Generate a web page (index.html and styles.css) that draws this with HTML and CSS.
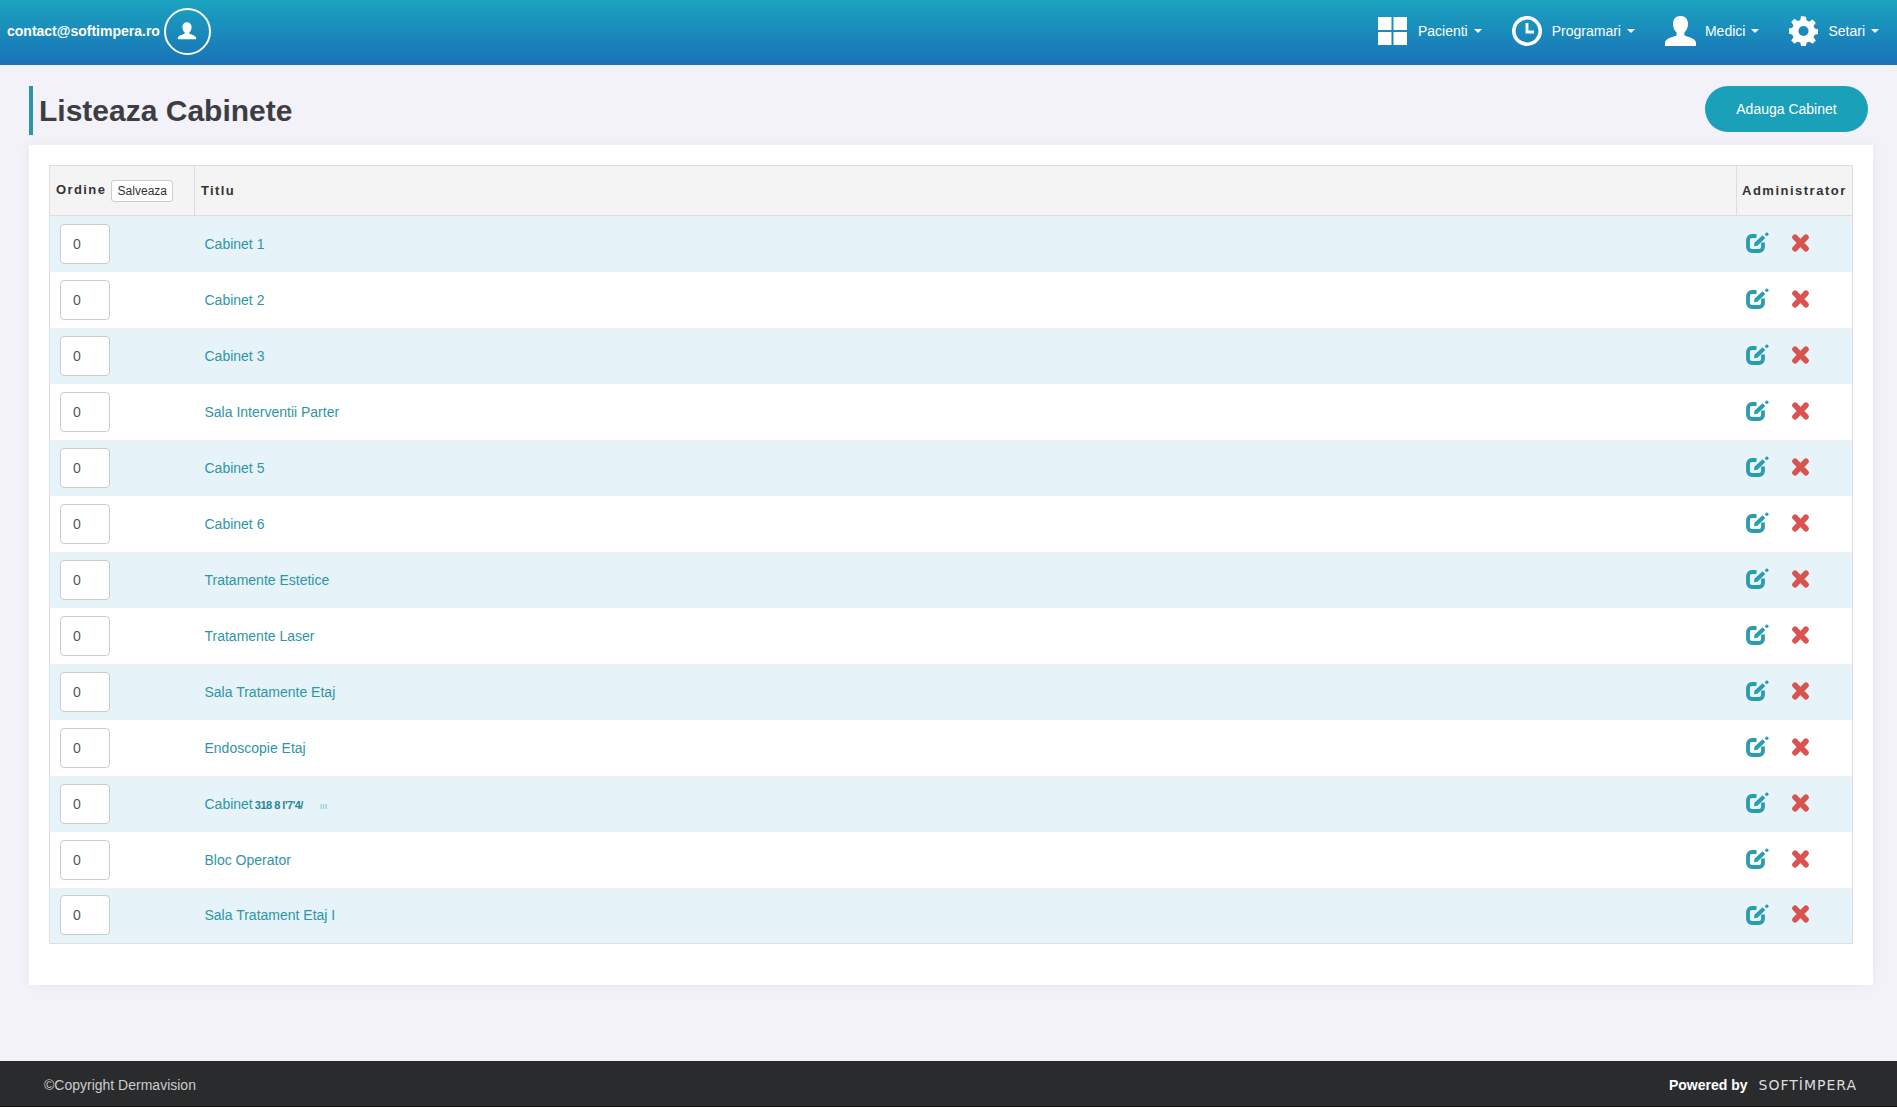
FILE: index.html
```html
<!DOCTYPE html>
<html lang="ro">
<head>
<meta charset="utf-8">
<title>Listeaza Cabinete</title>
<link rel="stylesheet" href="styles.css">
</head>
<body>
<header class="topbar">
  <div class="account">
    <span class="account-mail">contact@softimpera.ro</span>
    <span class="avatar">
      <svg width="22" height="22" viewBox="0 0 24 24"><path class="white" d="M12 2.500c3.200 0 5 2.300 5 5.300 0 2.400-1 4.400-2.400 5.500v1.700c2.500.9 7.400 2.200 7.400 4.800v1.200H2v-1.200c0-2.600 4.900-3.900 7.400-4.800v-1.700C8 12.200 7 10.200 7 7.800c0-3 1.800-5.300 5-5.300z"/></svg>
    </span>
  </div>
  <nav class="menu">
    <a class="menu-item item-grid">
      <svg width="29" height="28" viewBox="0 0 29 28"><path class="white" d="M0 0h13.500v13H0zM15.500 0H29v13H15.500zM0 15h13.500v13H0zM15.500 15H29v13H15.500z"/></svg>
      <span>Pacienti</span><i class="caret"></i>
    </a>
    <a class="menu-item item-clock">
      <svg width="30" height="30" viewBox="0 0 30 30"><circle cx="15" cy="15" r="13.200" fill="none" stroke="#fff" stroke-width="3.600"/><path d="M15 7v9h7" fill="none" stroke="#fff" stroke-width="2.800"/></svg>
      <span>Programari</span><i class="caret"></i>
    </a>
    <a class="menu-item item-user">
      <svg width="31" height="30" viewBox="0 0 31 30"><path class="white" d="M15.500 0c5 0 7.500 3.500 7.500 8 0 3.700-1.600 6.800-3.600 8.500v3c3.800 1.500 11.600 2.700 11.600 7.500v3H0v-3c0-4.800 7.800-6 11.600-7.500v-3C9.600 14.800 8 11.700 8 8c0-4.500 2.500-8 7.500-8z"/></svg>
      <span>Medici</span><i class="caret"></i>
    </a>
    <a class="menu-item item-gear">
      <svg width="29" height="30" viewBox="0 0 24 24"><path class="white" fill-rule="evenodd" d="M14 .200l.6 3.200c.8.200 1.500.5 2.100.9l2.800-1.900 2.700 2.700-1.900 2.800c.4.700.7 1.400.9 2.100l3.200.6v3.800l-3.200.6c-.2.800-.5 1.500-.9 2.100l1.900 2.800-2.700 2.700-2.800-1.900c-.7.400-1.400.7-2.100.9l-.6 3.200h-4l-.6-3.200c-.8-.2-1.500-.5-2.100-.9l-2.800 1.900-2.700-2.700 1.900-2.800c-.4-.7-.7-1.400-.9-2.100L-.4 13.900V10l3.200-.6c.2-.8.500-1.500.9-2.100L1.800 4.500l2.700-2.700 2.800 1.900c.7-.4 1.400-.7 2.100-.9l.6-3.200zM12 7.800a4.200 4.200 0 1 0 0 8.400 4.200 4.200 0 0 0 0-8.400z"/></svg>
      <span>Setari</span><i class="caret"></i>
    </a>
  </nav>
</header>

<main class="page">
  <div class="page-head">
    <h1 class="page-title">Listeaza Cabinete</h1>
    <a class="add-btn">Adauga Cabinet</a>
  </div>
  <section class="card">
    <table class="grid">
      <thead>
        <tr>
          <th class="col-order"><span class="order-label">Ordine</span><button class="save-btn">Salveaza</button></th>
          <th class="col-title">Titlu</th>
          <th class="col-admin">Administrator</th>
        </tr>
      </thead>
      <tbody id="rows"></tbody>
    </table>
  </section>
</main>

<footer class="footer">
  <span class="copyright">©Copyright Dermavision</span>
  <span class="powered"><b>Powered by</b><span class="brand">SOFTİMPERA</span></span>
</footer>

<template id="row-tpl">
  <tr>
    <td class="cell-order"><input class="order-input" type="text" value="0"></td>
    <td class="cell-title"><a class="row-link"></a></td>
    <td class="cell-admin">
      <span class="actions">
        <svg width="23" height="21" viewBox="0 0 23 21"><path d="M10.500 4H6a4 4 0 0 0-4 4v7a4 4 0 0 0 4 4h7a4 4 0 0 0 4-4v-4.500" fill="none" stroke="#2b9bb0" stroke-width="3.800"/><path d="M8 14.300l.5-3.500 8-7.600 2.800 2.900-7.800 7.700z" fill="#2b9bb0"/><circle cx="20.800" cy="2.200" r="1.700" fill="#2b9bb0"/></svg>
        <svg width="17" height="18" viewBox="0 0 17 18"><path d="M3 3.200l11 11.600M14 3.200L3 14.800" stroke="#d9534f" stroke-width="5.600" stroke-linecap="round"/></svg>
      </span>
    </td>
  </tr>
</template>
<script src="app.js"></script>
</body>
</html>
```
FILE: styles.css
```css
* { box-sizing: border-box; }
html, body { margin: 0; height: 100%; }
body {
  display: flex;
  flex-direction: column;
  min-height: 1107px;
  height: 1107px;
  overflow: hidden;
  background: #f2f2f8;
  font-family: "Liberation Sans", Arial, sans-serif;
  font-size: 14px;
  color: #333;
}
.white { fill: #fff; }

.topbar {
  height: 65px;
  flex: none;
  display: flex;
  align-items: center;
  justify-content: space-between;
  padding: 0 18px 3px 7px;
  color: #fff;
  background: linear-gradient(#1aa3bf, #1a72b8);
}
.account { display: flex; align-items: center; gap: 4px; }
.account-mail { font-weight: 700; font-size: 14px; }
.avatar {
  width: 47px;
  height: 47px;
  border: 2px solid #fff;
  border-radius: 50%;
  display: flex;
  align-items: center;
  justify-content: center;
}
.menu { display: flex; align-items: center; gap: 30px; }
.menu-item { display: flex; align-items: center; font-size: 14px; color: #fff; }
.item-grid svg { margin-right: 11px; }
.item-clock svg { margin-right: 10px; }
.item-user svg { margin-right: 9px; }
.item-gear svg { margin-right: 10px; }
.caret {
  margin-left: 6px;
  border-top: 4px solid #fff;
  border-left: 4px solid transparent;
  border-right: 4px solid transparent;
}

.page { flex: 1; padding: 21px 24px 0 29px; }
.page-head {
  display: flex;
  justify-content: space-between;
  align-items: flex-start;
  height: 59px;
}
.page-title {
  margin: 0;
  height: 49px;
  line-height: 49px;
  padding-left: 6px;
  border-left: 4px solid #2a96a8;
  font-size: 30px;
  font-weight: 700;
  color: #3d3d42;
}
.add-btn {
  width: 163px;
  height: 46px;
  margin-right: 5px;
  border-radius: 23px;
  background: #1aa0b8;
  color: #fff;
  font-size: 14px;
  display: flex;
  align-items: center;
  justify-content: center;
}
.card {
  height: 840px;
  padding: 20px 20px 0;
  background: #fff;
  box-shadow: 0 0 12px rgba(0, 0, 0, .05);
}

.grid {
  width: 100%;
  border-collapse: collapse;
  table-layout: fixed;
  border: 1px solid #ddd;
}
.grid thead tr { height: 50px; background: #f4f4f5; }
.grid th {
  padding: 0 5px;
  text-align: left;
  font-size: 13px;
  font-weight: 700;
  letter-spacing: 1.400px;
  color: #333;
  border: 1px solid #ddd;
}
.col-order { width: 145px; }
.col-title { padding-left: 6px !important; }
.col-admin { width: 116px; letter-spacing: 1.500px !important; }
.order-label { position: relative; top: -1px; margin: 0 5px 0 1px; }
.save-btn {
  height: 22px;
  width: 62px;
  padding: 0;
  font: 12px "Liberation Sans", Arial, sans-serif;
  color: #333;
  background: #fff;
  border: 1px solid #ccc;
  border-radius: 3px;
}
.grid tbody tr { height: 56px; }
.grid tbody tr:nth-child(odd) { background: #e6f3f8; }
.grid tbody tr:nth-child(even) { background: #fff; }
.grid td { padding: 0; }
.cell-order { padding-left: 10px !important; }
.order-input {
  display: block;
  width: 50px;
  height: 40px;
  padding: 0 12px;
  font: 14px "Liberation Sans", Arial, sans-serif;
  color: #555;
  background: #fff;
  border: 1px solid #ccc;
  border-radius: 4px;
}
.cell-title { padding-left: 10px !important; }
.row-link { color: #2f95a6; font-size: 14px; }
.garble {
  display: inline-block;
  width: 0;
  margin-left: 2px;
  font-size: 11px;
  font-weight: 700;
  letter-spacing: -.5px;
  white-space: nowrap;
  color: #2a8298;
}
.garble-far { font-size: 9px; font-weight: 400; color: #6fbfd0; letter-spacing: 0; margin-left: 65px; }
.actions { display: flex; align-items: center; gap: 23px; padding-left: 9px; margin-top: -2px; }

.footer {
  height: 46px;
  flex: none;
  display: flex;
  align-items: center;
  justify-content: space-between;
  padding: 2px 40px 0 44px;
  background: #2a2b2d;
  border-bottom: 1px solid #111;
  color: #ccc;
  font-size: 14px;
}
.powered { display: flex; align-items: center; gap: 11px; color: #fff; }
.brand { font-family: "DejaVu Sans", sans-serif; font-size: 14px; letter-spacing: 1px; color: #ddd; }
```
FILE: app.js
```js
var names = ["Cabinet 1","Cabinet 2","Cabinet 3","Sala Interventii Parter","Cabinet 5","Cabinet 6","Tratamente Estetice","Tratamente Laser","Sala Tratamente Etaj","Endoscopie Etaj","Cabinet","Bloc Operator","Sala Tratament Etaj I"];
var body = document.getElementById("rows");
var tpl = document.getElementById("row-tpl");
names.forEach(function (name, i) {
  var row = tpl.content.cloneNode(true);
  var link = row.querySelector(".row-link");
  link.textContent = name;
  if (i === 10) {
    var a = document.createElement("span");
    a.className = "garble";
    a.textContent = "318 8 l'7'4/";
    var b = document.createElement("span");
    b.className = "garble garble-far";
    b.textContent = "ııı";
    link.appendChild(a);
    link.appendChild(b);
  }
  body.appendChild(row);
});
```
